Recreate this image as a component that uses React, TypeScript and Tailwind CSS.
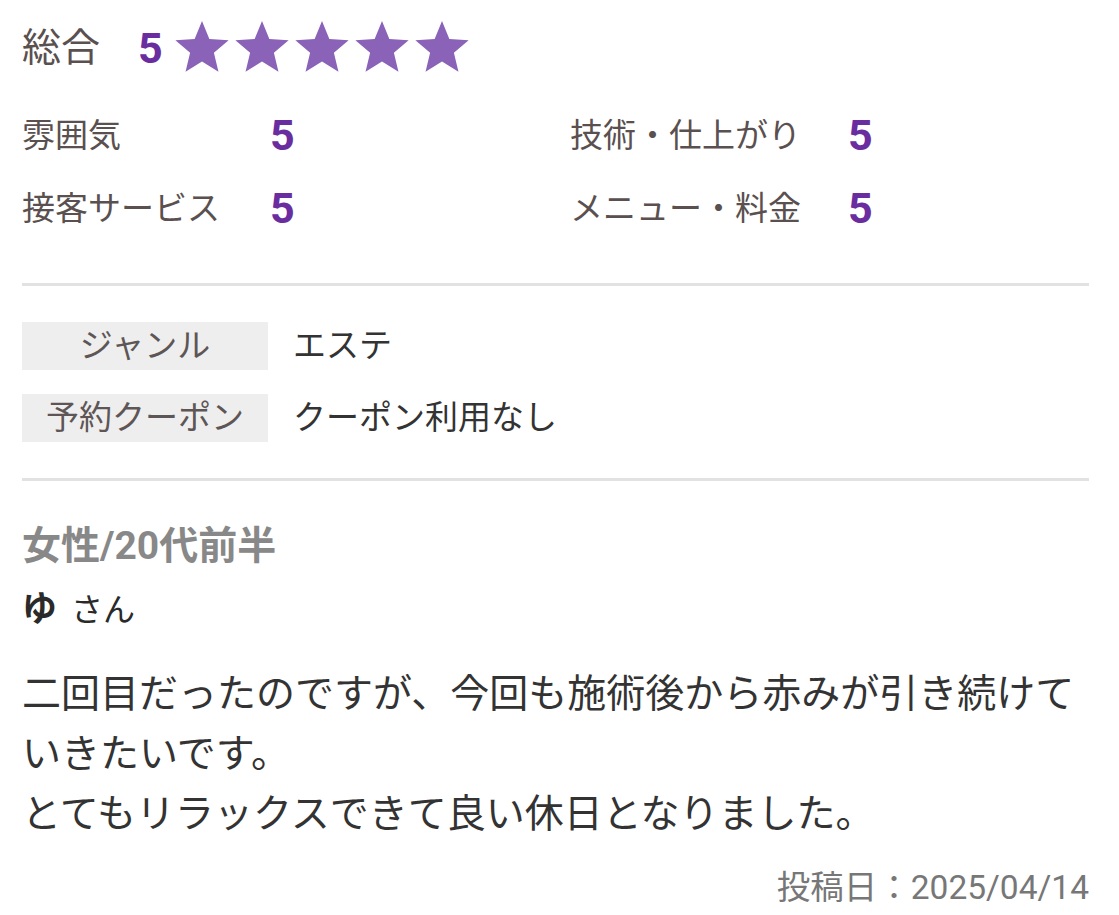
import React from "react";

const FONT = { fontFamily: 'Roboto, "Noto Sans CJK JP", "Noto Sans", sans-serif' };

function starPoints(cx: number, cy: number, R: number, r: number) {
  const pts: string[] = [];
  for (let i = 0; i < 10; i++) {
    const rad = i % 2 === 0 ? R : r;
    const a = -Math.PI / 2 + (i * Math.PI) / 5;
    pts.push(`${(cx + rad * Math.cos(a)).toFixed(2)},${(cy + rad * Math.sin(a)).toFixed(2)}`);
  }
  return pts.join(" ");
}

const STAR = starPoints(30, 29, 28, 12.5);

function Star() {
  return (
    <svg width="60" height="54" viewBox="0 0 60 54" className="block">
      <polygon fill="#8a62b8" points={STAR} />
    </svg>
  );
}

function Rating({ label, labelW }: { label: string; labelW: string }) {
  return (
    <div className="flex items-center h-[73px]">
      <div className={`${labelW} text-[33px] text-[#5a5050]`}>{label}</div>
      <div className="text-[43px] font-bold text-[#6a2d9f] leading-none">5</div>
    </div>
  );
}

export default function App() {
  return (
    <div style={FONT} className="bg-white w-[1119px] h-[915px] pl-[22px] pr-[30px] overflow-hidden">
      <div className="flex items-center h-[96px]">
        <div className="text-[39px] text-[#5a5050] w-[116px]">総合</div>
        <div className="text-[43px] font-bold text-[#6a2d9f] leading-none w-[34px]">5</div>
        <div className="flex -mt-[2px]">
          <Star />
          <Star />
          <Star />
          <Star />
          <Star />
        </div>
      </div>
      <div className="mt-[3px] flex">
        <div className="w-[548px]">
          <Rating label="雰囲気" labelW="w-[248px]" />
          <Rating label="接客サービス" labelW="w-[248px]" />
        </div>
        <div>
          <Rating label="技術・仕上がり" labelW="w-[278px]" />
          <Rating label="メニュー・料金" labelW="w-[278px]" />
        </div>
      </div>
      <div className="mt-[38px] h-[3px] bg-[#e2e2e2]" />
      <div className="mt-[36px] flex flex-col gap-[24px]">
        <div className="flex items-center h-[48px]">
          <div className="w-[246px] h-full bg-[#eeeeee] flex items-center justify-center text-[33px] text-[#5e5656]">ジャンル</div>
          <div className="ml-[25px] text-[33px] text-[#333]">エステ</div>
        </div>
        <div className="flex items-center h-[48px]">
          <div className="w-[246px] h-full bg-[#eeeeee] flex items-center justify-center text-[33px] text-[#5e5656]">予約クーポン</div>
          <div className="ml-[25px] text-[33px] text-[#333]">クーポン利用なし</div>
        </div>
      </div>
      <div className="mt-[36px] h-[3px] bg-[#e2e2e2]" />
      <div className="mt-[40px] leading-[50px] text-[39px] font-bold text-[#888]">女性/20代前半</div>
      <div className="mt-[14px] leading-[50px] text-[#2a2a2a]">
        <span className="text-[35px] font-bold">ゆ</span>
        <span className="text-[32px] ml-[14px]">さん</span>
      </div>
      <div className="mt-[23px] text-[39px] leading-[60px] text-[#333]">
        二回目だったのですが、今回も施術後から赤みが引き続けていきたいです。
        <br />
        とてもリラックスできて良い休日となりました。
      </div>
      <div className="mt-[19px] leading-[50px] text-[33.5px] text-[#777] text-right">投稿日：2025/04/14</div>
    </div>
  );
}
